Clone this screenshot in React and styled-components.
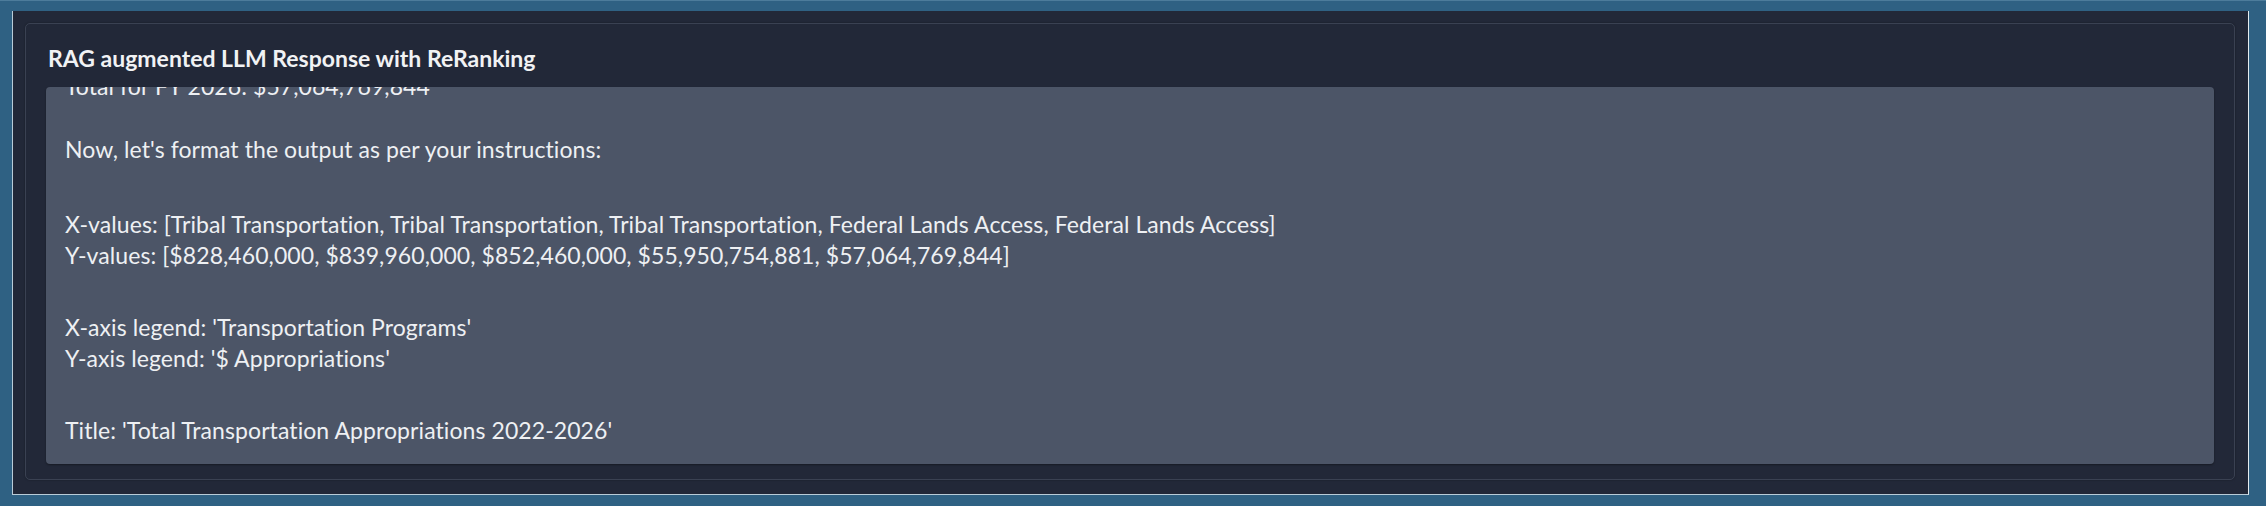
import React from "react";
import styled, { createGlobalStyle } from "styled-components";

const Global = createGlobalStyle`
  html, body { margin: 0; padding: 0; background: #ffffff; }
  body { font-family: "Lato", "Open Sans", sans-serif; }
  #root { width: 2266px; height: 506px; }
`;

const Frame = styled.div`
  box-sizing: border-box;
  width: 2266px;
  height: 506px;
  background: #2f6183;
  border-top: 1px solid #4d7c9b;
  padding: 10px 17px 11px 12px;
  display: flex;
`;

const Canvas = styled.div`
  box-sizing: border-box;
  flex: 1;
  background: #222838;
  border-left: 1px solid #b9ccd8;
  border-right: 1px solid #e4ecf0;
  border-bottom: 1px solid #b9ccd8;
  padding: 12px 13px 14px 12px;
  display: flex;
`;

const Panel = styled.section`
  box-sizing: border-box;
  flex: 1;
  border: 1px solid #3a4152;
  border-radius: 5px;
  box-shadow: 0 0 2px rgba(0, 0, 0, 0.35);
  padding: 0 20px 15px 20px;
  display: flex;
  flex-direction: column;
`;

const Title = styled.h2`
  margin: 0;
  padding: 20px 0 15px 2px;
  font-family: "Lato", sans-serif;
  font-weight: 700;
  font-size: 23px;
  line-height: 28px;
  color: #f1f2f4;
  letter-spacing: 0;
`;

const Output = styled.div`
  box-sizing: border-box;
  flex: 1;
  min-height: 0;
  background: #4c5567;
  border-radius: 4px;
  box-shadow: 0 1px 2px rgba(0, 0, 0, 0.35);
  padding: 0 19px 18px 19px;
  overflow: hidden;
  display: flex;
  flex-direction: column;
  justify-content: flex-end;
`;

const Para = styled.p`
  margin: ${(p) => p.$gap}px 0 0 0;
  font-family: "Lato", sans-serif;
  font-size: 23px;
  line-height: 31px;
  letter-spacing: 0.08px;
  color: #eef0f3;
  white-space: pre;
`;

const paragraphs = [
  { text: "Total for FY 2026: $57,064,769,844", gap: 0 },
  { text: "Now, let's format the output as per your instructions:", gap: 32 },
  {
    text:
      "X-values: [Tribal Transportation, Tribal Transportation, Tribal Transportation, Federal Lands Access, Federal Lands Access]\nY-values: [$828,460,000, $839,960,000, $852,460,000, $55,950,754,881, $57,064,769,844]",
    gap: 44,
  },
  { text: "X-axis legend: 'Transportation Programs'\nY-axis legend: '$ Appropriations'", gap: 41 },
  { text: "Title: 'Total Transportation Appropriations 2022-2026'", gap: 41 },
];

export default function App() {
  return (
    <>
      <Global />
      <Frame>
        <Canvas>
          <Panel>
            <Title>RAG augmented LLM Response with ReRanking</Title>
            <Output>
              {paragraphs.map((p, i) => (
                <Para key={i} $gap={p.gap}>
                  {p.text}
                </Para>
              ))}
            </Output>
          </Panel>
        </Canvas>
      </Frame>
    </>
  );
}
